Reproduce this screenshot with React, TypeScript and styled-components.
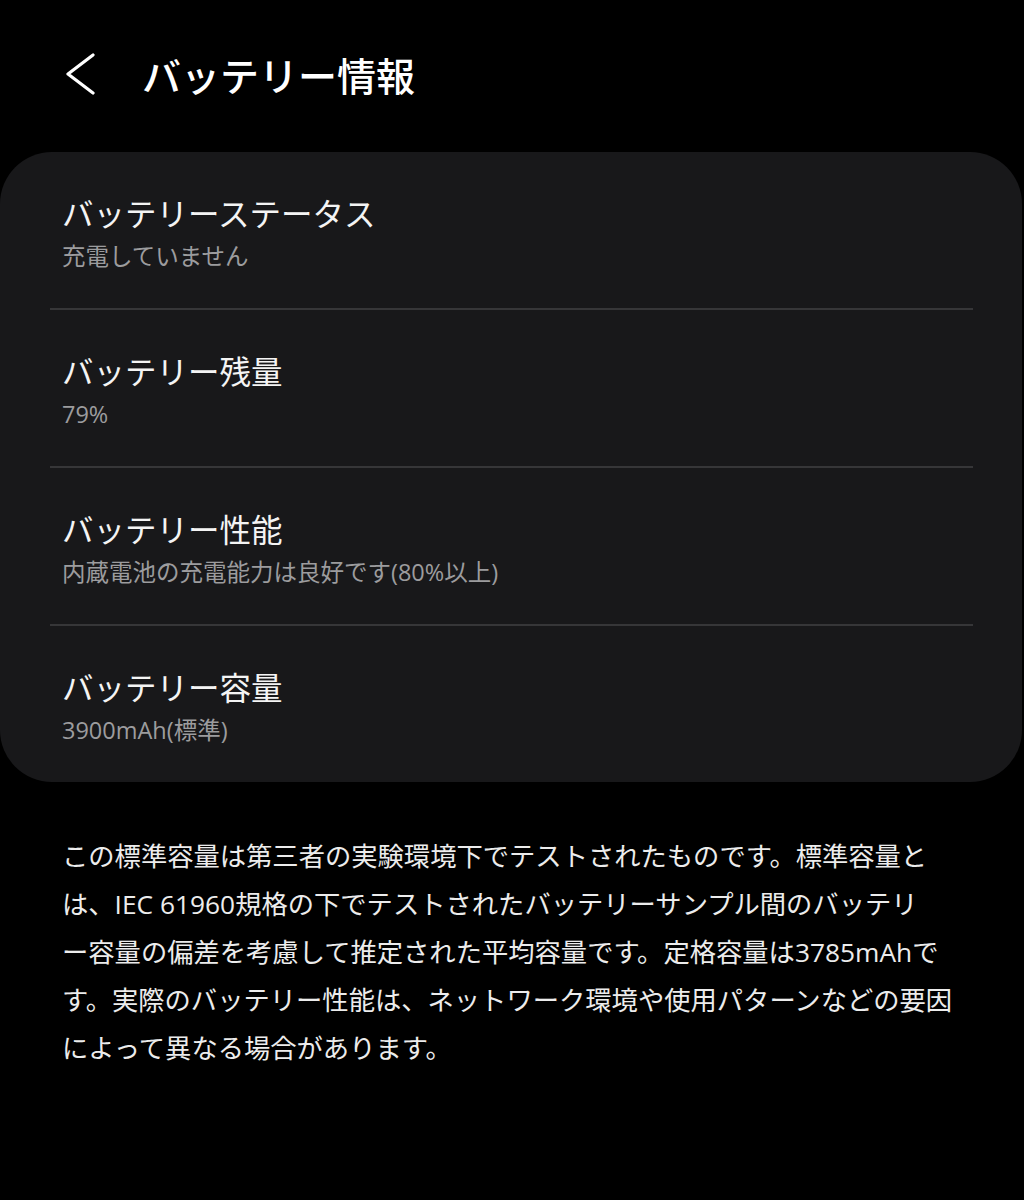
import styled, { createGlobalStyle } from "styled-components";

const GlobalStyle = createGlobalStyle`
  html, body {
    margin: 0;
    padding: 0;
    background: #000000;
  }
  body {
    font-family: "Open Sans", "Noto Sans CJK JP", sans-serif;
    color: #f2f2f2;
  }
`;

const Page = styled.div`
  width: 1024px;
  min-height: 1200px;
  background: #000000;
`;

const Header = styled.header`
  display: flex;
  align-items: center;
  height: 152px;
  padding: 0 0 4px 62px;
  box-sizing: border-box;
`;

const BackButton = styled.button`
  display: flex;
  align-items: center;
  justify-content: center;
  width: 36px;
  height: 48px;
  padding: 0;
  margin-right: 44px;
  border: 0;
  background: transparent;
  cursor: pointer;
`;

const Title = styled.h1`
  margin: 0;
  font-family: "Noto Sans CJK JP", sans-serif;
  font-size: 39px;
  font-weight: 500;
  color: #ffffff;
  letter-spacing: 0;
`;

const Card = styled.section`
  margin-right: 2px;
  padding: 0 49px 0 50px;
  background: #18181a;
  border-radius: 52px;
`;

const Row = styled.div<{ $last?: boolean }>`
  padding: 39px 12px 36px;
  border-bottom: ${(p) => (p.$last ? "none" : "2px solid #363638")};
`;

const RowTitle = styled.div`
  font-family: "Noto Sans CJK JP", sans-serif;
  font-size: 31.5px;
  line-height: 42px;
  color: #f4f4f4;
`;

const RowValue = styled.div`
  margin-top: 7px;
  font-family: "Open Sans", "Noto Sans CJK JP", sans-serif;
  font-size: 23.5px;
  line-height: 32px;
  color: #9c9c9e;
`;

const Note = styled.p`
  margin: 50px 0 0;
  padding: 0 20px 0 62px;
  font-family: "Open Sans", "Noto Sans CJK JP", sans-serif;
  font-size: 26.3px;
  line-height: 48px;
  color: #ececec;
  white-space: nowrap;
`;

const items = [
  { title: "バッテリーステータス", value: "充電していません" },
  { title: "バッテリー残量", value: "79%" },
  { title: "バッテリー性能", value: "内蔵電池の充電能力は良好です(80%以上)" },
  { title: "バッテリー容量", value: "3900mAh(標準)" },
];

const noteLines = [
  "この標準容量は第三者の実験環境下でテストされたものです。標準容量と",
  "は、IEC 61960規格の下でテストされたバッテリーサンプル間のバッテリ",
  "ー容量の偏差を考慮して推定された平均容量です。定格容量は3785mAhで",
  "す。実際のバッテリー性能は、ネットワーク環境や使用パターンなどの要因",
  "によって異なる場合があります。",
];

function App() {
  return (
    <Page>
      <GlobalStyle />
      <Header>
        <BackButton aria-label="戻る">
          <svg width="32" height="42" viewBox="0 0 32 42" fill="none">
            <path
              d="M29 2 L4 21 L29 40"
              stroke="#ffffff"
              strokeWidth="3.2"
              strokeLinecap="round"
              strokeLinejoin="round"
            />
          </svg>
        </BackButton>
        <Title>バッテリー情報</Title>
      </Header>
      <Card>
        {items.map((it, i) => (
          <Row key={it.title} $last={i === items.length - 1}>
            <RowTitle>{it.title}</RowTitle>
            <RowValue>{it.value}</RowValue>
          </Row>
        ))}
      </Card>
      <Note>
        {noteLines.map((line, i) => (
          <span key={i}>
            {line}
            {i < noteLines.length - 1 && <br />}
          </span>
        ))}
      </Note>
    </Page>
  );
}

export default App;
